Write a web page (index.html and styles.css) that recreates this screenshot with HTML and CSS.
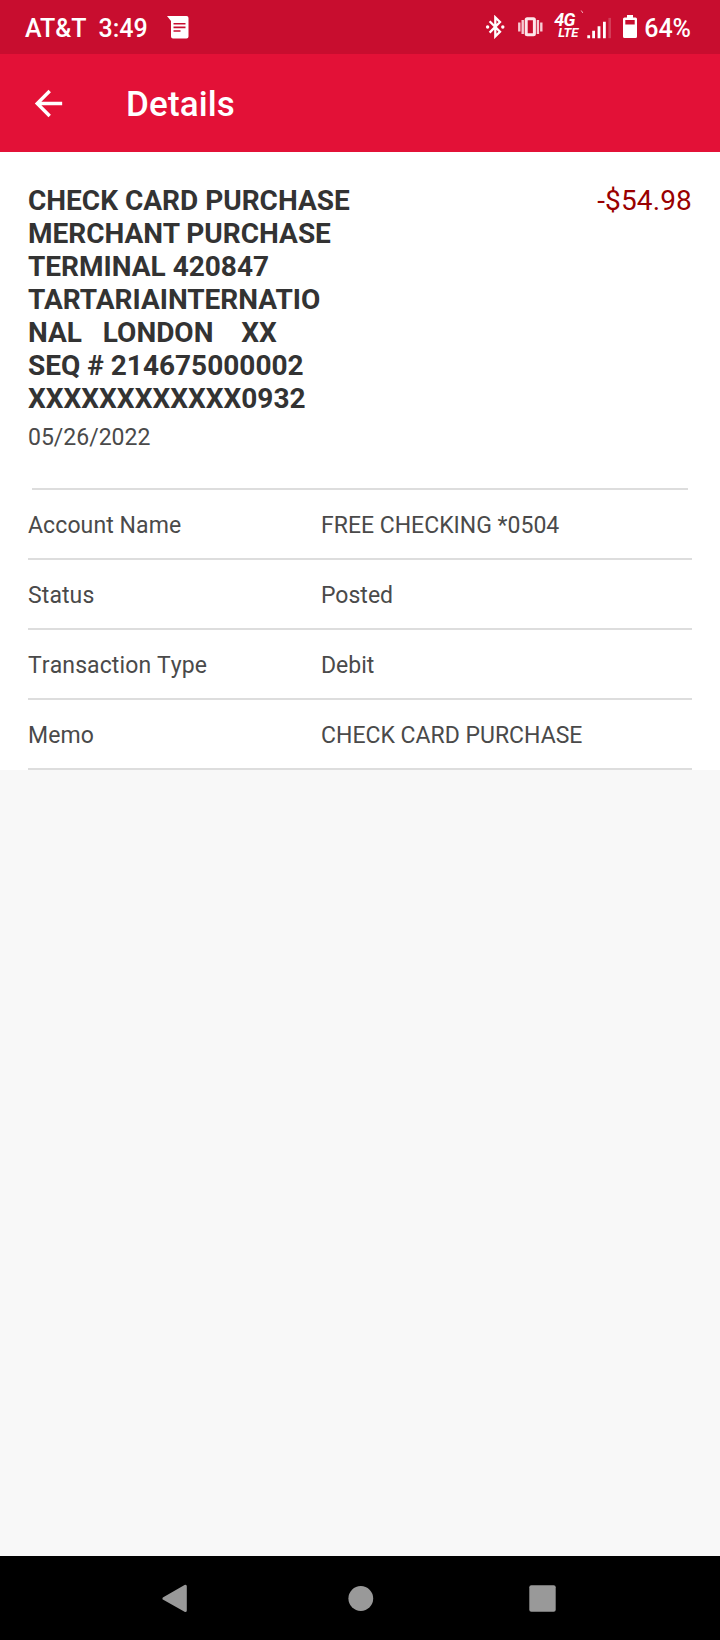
FILE: index.html
```html
<!DOCTYPE html>
<html lang="en">
<head>
  <meta charset="UTF-8" />
  <meta name="viewport" content="width=device-width, initial-scale=1.0" />
  <title>Details</title>
  <link rel="stylesheet" href="styles.css">
</head>
<body>
  <div class="status-bar">
    <div class="status-left">
      <span class="carrier">AT&amp;T</span>
      <span class="clock">3:49</span>
      <svg class="icon-message" width="22" height="23" viewBox="0 0 22 23">
        <path fill="#fff" fill-rule="evenodd" d="M0 0H19.5a2 2 0 0 1 2 2V20.5a2 2 0 0 1-2 2H6a2 2 0 0 1-2-2V5zM6.5 7v1.6h12V7zM6.5 10.6v1.6h12v-1.6zM6.5 14.2v1.6h7v-1.6z"/>
      </svg>
    </div>
    <div class="status-right">
      <svg width="20" height="24" viewBox="0 0 20 24">
        <path fill="none" stroke="#fff" stroke-width="2.3" d="M4.6 6.2L15 16.8L10.3 21.4V2.4L15 7L4.6 17.6"/>
        <circle cx="2.6" cy="12" r="1.7" fill="#fff"/>
        <circle cx="17.8" cy="12" r="1.7" fill="#fff"/>
      </svg>
      <svg class="icon-vibrate" width="26" height="24" viewBox="0 0 26 24">
        <rect x="9.2" y="3.8" width="8.2" height="16" rx="1" fill="none" stroke="#fde6ea" stroke-width="3"/>
        <path stroke="#f7cbd3" stroke-width="2.4" d="M2.3 7.5v9M5.7 5v14M20.9 5v14M24.3 7.5v9"/>
      </svg>
      <div class="network">
        <span class="gen">4G</span>
        <span class="lte">LTE</span>
      </div>
      <svg class="icon-signal" width="33" height="27" viewBox="-8 0 33 27">
        <path stroke="#f3b0bd" stroke-width="1" d="M-5.8-3.5l1.6 2.4"/>
        <path fill="#fff" d="M0.3 21.2h2.8v3H0.3zM5.2 16.7h2.8v7.5H5.2zM10.6 12.2h2.8v12h-2.8zM16 7.7h2.8v16.5H16z"/>
        <path fill="#fff" fill-opacity="0.2" d="M21.4 3.9h2.6v20.3h-2.6z"/>
      </svg>
      <svg class="icon-battery" width="14" height="24" viewBox="0 0 14 24">
        <path fill="#fff" fill-rule="evenodd" d="M4 0h6v2.5h2.5A1.5 1.5 0 0 1 14 4v17.5a1.5 1.5 0 0 1-1.5 1.5h-11A1.5 1.5 0 0 1 0 21.5V4a1.5 1.5 0 0 1 1.5-1.5H4zM2.3 5v4.6h9.4V5z"/>
      </svg>
      <span class="percent">64%</span>
    </div>
  </div>

  <header class="app-bar">
    <svg width="41" height="41" viewBox="0 0 24 24">
      <path fill="#fff" d="M20 11H7.83l5.59-5.59L12 4l-8 8 8 8 1.41-1.41L7.83 13H20v-2z"/>
    </svg>
    <h1>Details</h1>
  </header>

  <main class="card">
    <section class="summary">
      <div>
        <h2>CHECK CARD PURCHASE
MERCHANT PURCHASE
TERMINAL 420847
TARTARIAINTERNATIO
NAL   LONDON    XX
SEQ # 214675000002
XXXXXXXXXXXX0932</h2>
        <p class="date">05/26/2022</p>
      </div>
      <span class="amount">-$54.98</span>
    </section>

    <dl class="rows">
      <div class="row"><dt>Account Name</dt><dd>FREE CHECKING *0504</dd></div>
      <div class="row"><dt>Status</dt><dd>Posted</dd></div>
      <div class="row"><dt>Transaction Type</dt><dd>Debit</dd></div>
      <div class="row"><dt>Memo</dt><dd>CHECK CARD PURCHASE</dd></div>
    </dl>
  </main>

  <nav class="nav-bar">
    <svg width="26" height="28" viewBox="0 0 26 28">
      <path fill="#999" stroke="#999" stroke-width="3" stroke-linejoin="round" d="M2 14.5L23.3 2.3V26.5z"/>
    </svg>
    <svg width="30" height="28" viewBox="0 0 30 28">
      <circle cx="16.8" cy="14.5" r="12.4" fill="#999"/>
    </svg>
    <svg width="27" height="28" viewBox="0 0 27 28">
      <rect x="0.3" y="1.3" width="26.4" height="26.4" rx="2" fill="#999"/>
    </svg>
  </nav>
</body>
</html>
```
FILE: styles.css
```css
* {
  box-sizing: border-box;
}
body {
  margin: 0;
  min-height: 1640px;
  display: flex;
  flex-direction: column;
  font-family: Roboto, sans-serif;
  background-color: #f8f8f8;
  color: #4a4a4a;
}
h1, h2, p, dl, dd {
  margin: 0;
}
svg {
  display: block;
  flex: none;
}
.status-bar {
  height: 54px;
  padding: 0 29px 0 25px;
  display: flex;
  justify-content: space-between;
  background-color: #c80d2f;
  color: #fff;
  font-size: 25px;
  font-weight: 500;
}
.status-left, .status-right {
  display: flex;
  align-items: center;
}
.carrier, .clock, .percent {
  padding-top: 3px;
}
.clock {
  margin-left: 12px;
}
.icon-message {
  margin-left: 19px;
}
.icon-vibrate {
  margin-left: 12px;
}
.network {
  display: flex;
  flex-direction: column;
  width: 26px;
  margin-left: 11px;
  margin-top: -2px;
  font-style: italic;
  font-weight: 700;
}
.gen {
  font-size: 18px;
  line-height: 14px;
  letter-spacing: -0.8px;
}
.lte {
  margin-left: 4px;
  font-size: 13px;
  line-height: 12px;
}
.icon-signal {
  margin-left: -1px;
  overflow: visible;
}
.icon-battery {
  margin-left: 11px;
}
.percent {
  margin-left: 7px;
}
.app-bar {
  height: 98px;
  padding: 0 28px;
  display: flex;
  align-items: center;
  gap: 57px;
  background-color: #e31137;
  color: #fff;
}
.app-bar h1 {
  padding-top: 2px;
  font-size: 35px;
  font-weight: 500;
  letter-spacing: 0.15px;
}
.card {
  height: 618px;
  padding: 32px 28px 0;
  background-color: #fff;
}
.summary {
  height: 304px;
  display: flex;
  justify-content: space-between;
}
.summary h2 {
  font-size: 28px;
  line-height: 33px;
  font-weight: 700;
  color: #333;
  white-space: pre;
}
.date {
  margin-top: 9px;
  font-size: 23px;
  line-height: 28px;
}
.amount {
  font-size: 28px;
  line-height: 33px;
  letter-spacing: 0.15px;
  color: #900;
}
.rows {
  font-size: 23px;
}
.rows::before {
  content: "";
  display: block;
  height: 2px;
  margin: 0 4px;
  background-color: #ddd;
}
.row {
  height: 70px;
  padding-top: 2px;
  display: grid;
  grid-template-columns: 293px 1fr;
  align-items: center;
  border-bottom: 2px solid #ddd;
}
.row dt {
  font-kerning: none;
  letter-spacing: 0.1px;
}
.nav-bar {
  height: 84px;
  margin-top: auto;
  padding: 0 164px 0 162px;
  display: flex;
  align-items: center;
  justify-content: space-between;
  background-color: #000;
}
```
